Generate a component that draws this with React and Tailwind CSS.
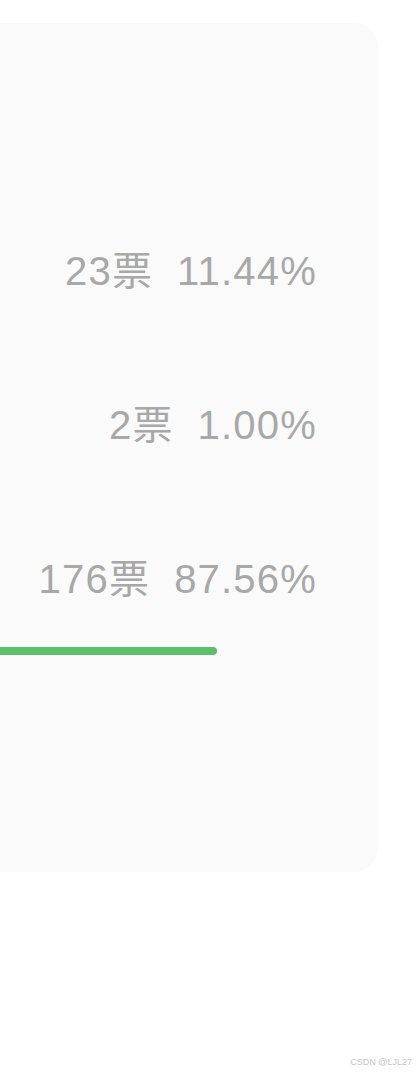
import React from 'react';

const rows = [
  { votes: 23, pct: '11.44%', bar: false },
  { votes: 2, pct: '1.00%', bar: false },
  { votes: 176, pct: '87.56%', bar: true },
];

const App = () => {
  return (
    <div
      className="h-[1074px] w-[417px] overflow-hidden bg-white flex flex-col"
      style={{ fontFamily: '"Liberation Sans", "Noto Sans CJK SC", sans-serif' }}
    >
      {/* Result card, its left side runs off the screen */}
      <div className="mt-[23px] -ml-[24px] w-[402px] h-[849px] rounded-[24px] bg-[#fafafa] pt-[228px] flex flex-col gap-[58px]">
        {rows.map((row) => (
          <div key={row.pct} className="flex flex-col">
            <div className="flex justify-end items-baseline pr-[61px] text-[40px] leading-[40px] text-[#a8a8a8] tracking-[1.2px]">
              <span>{row.votes}票</span>
              <span className="ml-[24px]">{row.pct}</span>
            </div>
            <div className="mt-[48px] h-2">
              {row.bar && <div className="h-2 w-[241px] rounded-full bg-[#5cbf6b]" />}
            </div>
          </div>
        ))}
      </div>

      <div className="flex-1" />
      <div className="text-right pr-[5px] pb-[7px] text-[9px] leading-[10px] text-[#c4c4c4]">
        CSDN @LJL27
      </div>
    </div>
  );
};

export default App;
